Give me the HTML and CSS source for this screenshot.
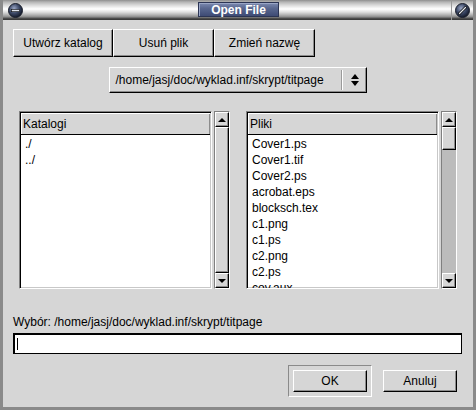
FILE: index.html
```html
<!DOCTYPE html>
<html lang="pl">
<head>
<meta charset="utf-8">
<title>Open File</title>
<link rel="stylesheet" href="styles.css">
</head>
<body>
<div class="window">
  <div class="titlebar">
    <div class="tb-side tb-left">
      <svg class="tb-btn" width="15" height="15" viewBox="0 0 15 15">
        <defs>
          <radialGradient id="g1" cx="40%" cy="35%" r="65%">
            <stop offset="0" stop-color="#9aa6c4"/>
            <stop offset="0.55" stop-color="#3c4866"/>
            <stop offset="1" stop-color="#141a2a"/>
          </radialGradient>
        </defs>
        <circle cx="7.5" cy="7.5" r="7" fill="url(#g1)" stroke="#1a1f2c" stroke-width="1"/>
        <rect x="3.5" y="6.5" width="8" height="2.2" fill="#dfe4ee" stroke="#111" stroke-width="0.6"/>
      </svg>
    </div>
    <div class="tb-title">Open File</div>
    <div class="tb-side tb-right">
      <svg class="tb-btn" width="15" height="15" viewBox="0 0 15 15">
        <defs>
          <radialGradient id="g2" cx="40%" cy="35%" r="65%">
            <stop offset="0" stop-color="#9aa6c4"/>
            <stop offset="0.55" stop-color="#3c4866"/>
            <stop offset="1" stop-color="#141a2a"/>
          </radialGradient>
        </defs>
        <circle cx="7.5" cy="7.5" r="7" fill="url(#g2)" stroke="#1a1f2c" stroke-width="1"/>
        <path d="M4.5 10.5 L10.5 4.5" stroke="#111" stroke-width="2.6" stroke-linecap="round"/>
        <path d="M4.5 10.5 L10.5 4.5" stroke="#e6eaf2" stroke-width="1.2" stroke-linecap="round"/>
      </svg>
    </div>
  </div>
  <div class="frame">
    <div class="toolbar">
      <div class="btn tool w100">Utwórz katalog</div>
      <div class="btn tool w101">Usuń plik</div>
      <div class="btn tool w101">Zmień nazwę</div>
    </div>
    <div class="combo">
      <span class="combo-text">/home/jasj/doc/wyklad.inf/skrypt/titpage</span>
      <span class="combo-sep"></span>
      <span class="combo-arrows"><span class="tri-up"></span><span class="tri-down"></span></span>
    </div>
    <div class="lists">
      <div class="panel">
        <div class="listbox">
          <div class="list-head">Katalogi</div>
          <div class="list-items">
            <div class="item">./</div>
            <div class="item">../</div>
          </div>
        </div>
        <div class="scrollbar">
          <div class="sb-btn"><span class="tri-up"></span></div>
          <div class="sb-trough"><div class="sb-thumb fill"></div></div>
          <div class="sb-btn"><span class="tri-down"></span></div>
        </div>
      </div>
      <div class="panel">
        <div class="listbox">
          <div class="list-head">Pliki</div>
          <div class="list-items">
            <div class="item">Cover1.ps</div>
            <div class="item">Cover1.tif</div>
            <div class="item">Cover2.ps</div>
            <div class="item">acrobat.eps</div>
            <div class="item">blocksch.tex</div>
            <div class="item">c1.png</div>
            <div class="item">c1.ps</div>
            <div class="item">c2.png</div>
            <div class="item">c2.ps</div>
            <div class="item">cov.aux</div>
          </div>
        </div>
        <div class="scrollbar">
          <div class="sb-btn"><span class="tri-up"></span></div>
          <div class="sb-trough dark"><div class="sb-thumb short"></div></div>
          <div class="sb-btn"><span class="tri-down"></span></div>
        </div>
      </div>
    </div>
    <div class="sel-label">Wybór: /home/jasj/doc/wyklad.inf/skrypt/titpage</div>
    <div class="sel-input"><span class="caret"></span></div>
    <div class="actions">
      <div class="focus"><div class="btn dlg">OK</div></div>
      <div class="btn dlg">Anuluj</div>
    </div>
  </div>
</div>
</body>
</html>
```
FILE: styles.css
```css
* { box-sizing: border-box; }
html, body { margin: 0; padding: 0; }
body {
  width: 476px;
  height: 410px;
  overflow: hidden;
  background: #d6d6d6;
  font-family: "Liberation Sans", Arial, sans-serif;
  font-size: 12px;
  color: #000;
}
.window {
  width: 476px;
  height: 410px;
  display: flex;
  flex-direction: column;
  background: #d6d6d6;
}
.titlebar {
  height: 20px;
  flex: none;
  display: flex;
  align-items: center;
  justify-content: space-between;
  background: linear-gradient(to bottom, #8e8e8e 0px, #b4b4b4 2px, #d8d8d8 5px, #f6f6f6 8px, #ffffff 9px, #e0e0e0 12px, #b0b0b0 15px, #8a8a8a 17px, #5a5a5a 18px, #3a3a3a 19px, #3a3a3a 20px);
  border-left: 3px solid #8a8a8a;
  border-right: 3px solid #8a8a8a;
}
.tb-side {
  width: 22px;
  height: 20px;
  display: flex;
  align-items: center;
  justify-content: center;
}
.tb-left { margin-left: 1px; }
.tb-right { margin-right: 0; border-left: 1px solid #9a9a9a; }
.tb-btn { display: block; }
.tb-title {
  width: 81px;
  height: 15px;
  margin-top: -1px;
  display: flex;
  align-items: center;
  justify-content: center;
  color: #fff;
  font-weight: bold;
  font-size: 12px;
  background: linear-gradient(to bottom, #7c8ab0 0%, #5a6890 40%, #3e4b74 100%);
  border: 1px solid #2c3554;
  box-shadow: inset 1px 1px #9aa6c6;
}
.frame {
  flex: 1;
  display: flex;
  flex-direction: column;
  padding: 9px 11px 0 10px;
  border-left: 3px solid #8a8a8a;
  border-right: 3px solid #8a8a8a;
  border-bottom: 3px solid #8a8a8a;
}
.btn {
  display: flex;
  align-items: center;
  justify-content: center;
  background: #d6d6d6;
  border: 1px solid;
  border-color: #ffffff #000000 #000000 #ffffff;
  box-shadow: inset -1px -1px #8c8c8c;
  white-space: nowrap;
}
.toolbar {
  display: flex;
  height: 28px;
}
.tool { height: 28px; }
.w100 { width: 100px; }
.w101 { width: 101px; }
.combo {
  margin: 10px auto 0;
  width: 258px;
  height: 26px;
  display: flex;
  align-items: center;
  background: #d6d6d6;
  border: 1px solid;
  border-color: #ffffff #000000 #000000 #ffffff;
  box-shadow: inset -1px -1px #8c8c8c;
}
.combo-text {
  flex: 1;
  padding-left: 6px;
  white-space: nowrap;
}
.combo-sep {
  width: 2px;
  height: 20px;
  border-left: 1px solid #9a9a9a;
  border-right: 1px solid #ffffff;
  margin-right: 6px;
}
.combo-arrows {
  width: 13px;
  margin-right: 4px;
  display: flex;
  flex-direction: column;
  align-items: center;
  gap: 2px;
}
.combo-arrows .tri-up { border-width: 0 4px 5px 4px; }
.combo-arrows .tri-down { border-width: 5px 4px 0 4px; }
.tri-up {
  display: block;
  width: 0;
  height: 0;
  border-style: solid;
  border-width: 0 4px 4px 4px;
  border-color: transparent transparent #000 transparent;
}
.tri-down {
  display: block;
  width: 0;
  height: 0;
  border-style: solid;
  border-width: 4px 4px 0 4px;
  border-color: #000 transparent transparent transparent;
}
.lists {
  margin: 18px 5px 0 6px;
  height: 178px;
  display: flex;
  gap: 16px;
}
.panel {
  width: 211px;
  display: flex;
  gap: 2px;
}
.listbox {
  width: 193px;
  height: 178px;
  background: #fff;
  border: 1px solid;
  border-color: #808080 #ffffff #ffffff #808080;
  box-shadow: inset 1px 1px #000, inset -1px -1px #c8c8c8;
  padding: 1px;
  overflow: hidden;
  display: flex;
  flex-direction: column;
}
.list-head {
  height: 22px;
  flex: none;
  background: #d6d6d6;
  display: flex;
  align-items: center;
  padding-left: 2px;
  border-bottom: 1px solid #000;
  box-shadow: inset 1px 1px #fff, inset -1px 0 #8c8c8c;
}
.list-items {
  padding-top: 1px;
  padding-left: 4px;
}
.item {
  height: 16px;
  line-height: 16px;
  white-space: nowrap;
}
.scrollbar {
  width: 16px;
  height: 178px;
  display: flex;
  flex-direction: column;
  border: 1px solid;
  border-color: #808080 #ffffff #ffffff #808080;
}
.sb-btn {
  height: 15px;
  flex: none;
  display: flex;
  align-items: center;
  justify-content: center;
  background: #d6d6d6;
  border: 1px solid;
  border-color: #ffffff #000000 #000000 #ffffff;
  box-shadow: inset -1px -1px #8c8c8c;
}
.sb-trough {
  flex: 1;
  display: flex;
  flex-direction: column;
  background: #d6d6d6;
}
.sb-trough.dark { background: #bcbcbc; }
.sb-thumb {
  background: #d6d6d6;
  border: 1px solid;
  border-color: #ffffff #000000 #000000 #ffffff;
  box-shadow: inset -1px -1px #8c8c8c;
}
.sb-thumb.fill { flex: 1; }
.sb-thumb.short { height: 23px; }
.sel-label {
  margin-top: 25px;
  height: 16px;
  line-height: 16px;
  white-space: nowrap;
}
.sel-input {
  margin-top: 3px;
  height: 21px;
  background: #fff;
  border: 1px solid #000;
  box-shadow: inset 1px 1px #000;
  display: flex;
  align-items: center;
  padding-left: 3px;
}
.caret {
  width: 1px;
  height: 12px;
  background: #000;
}
.actions {
  margin-top: 11px;
  margin-right: 5px;
  display: flex;
  justify-content: flex-end;
  align-items: center;
  gap: 11px;
}
.focus {
  padding: 4px;
  border: 1px solid;
  border-color: #8a8a8a #ffffff #ffffff #8a8a8a;
}
.dlg {
  width: 74px;
  height: 22px;
}
```
